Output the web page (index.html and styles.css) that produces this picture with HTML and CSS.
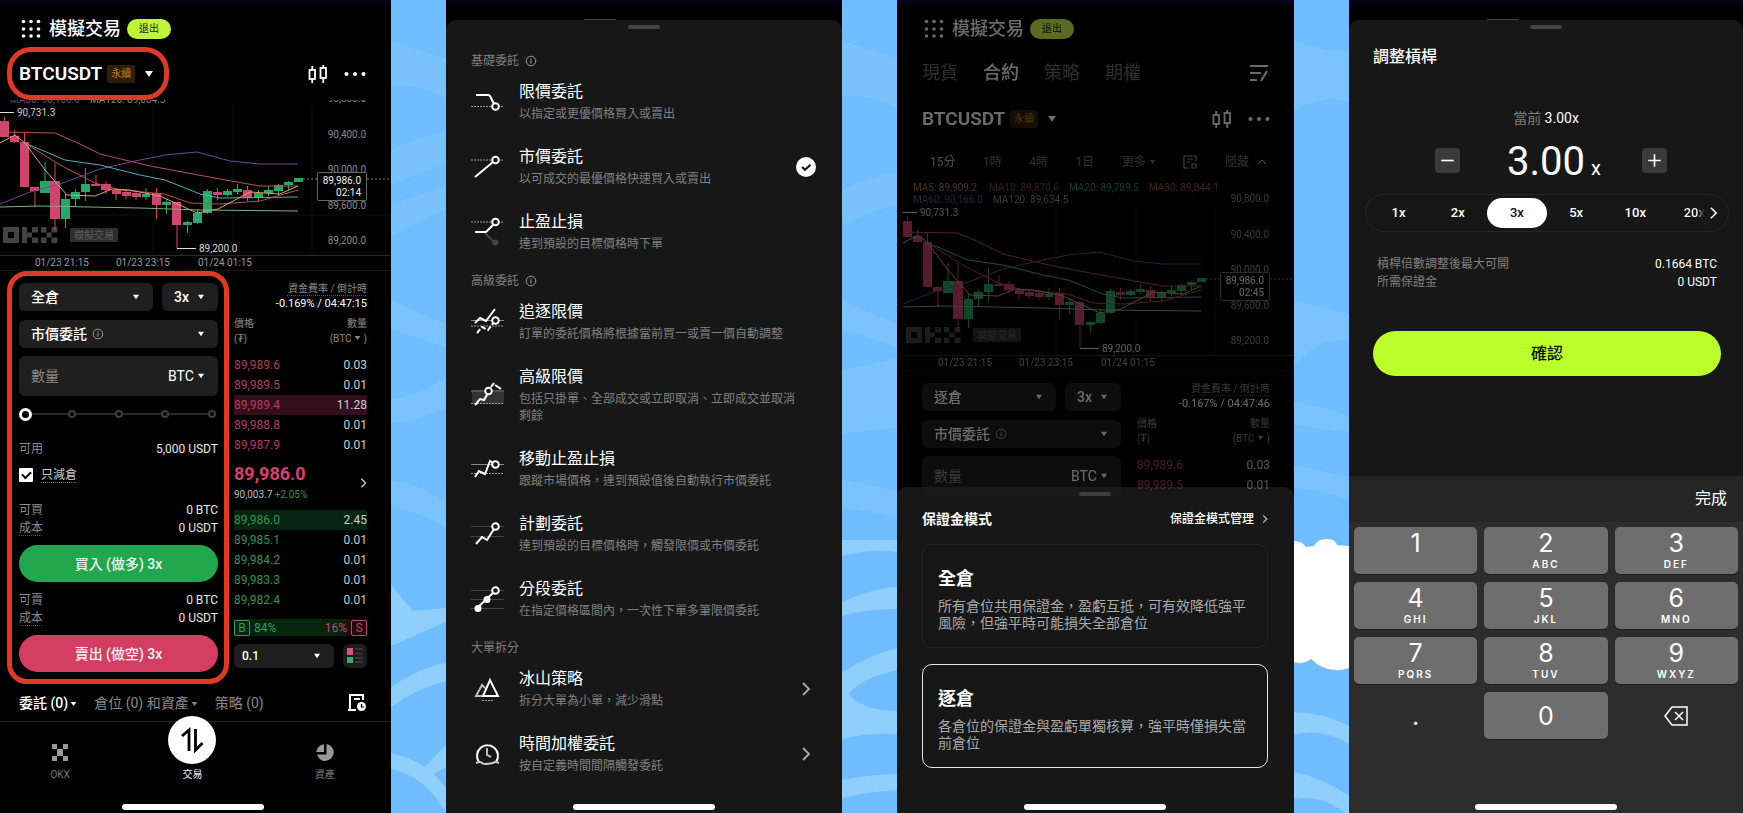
FILE: index.html
```html
<!DOCTYPE html>
<html lang="zh-Hant">
<head>
<meta charset="utf-8">
<meta name="viewport" content="width=device-width, initial-scale=1">
<title>模擬交易</title>
<link rel="stylesheet" href="styles.css">
</head>
<body>
<svg class="sprite" aria-hidden="true">
  <defs>
    <symbol id="i-grid" viewBox="0 0 20 20"><g fill="currentColor"><circle cx="2.5" cy="2.5" r="1.8"/><circle cx="10" cy="2.5" r="1.8"/><circle cx="17.500" cy="2.5" r="1.8"/><circle cx="2.5" cy="10" r="1.8"/><circle cx="10" cy="10" r="1.8"/><circle cx="17.500" cy="10" r="1.8"/><circle cx="2.5" cy="17" r="1.8"/><circle cx="10" cy="17" r="1.8"/><circle cx="17.500" cy="17" r="1.8"/></g></symbol>
    <symbol id="i-caret" viewBox="0 0 10 8"><path d="M1 1h8L5 7z" fill="currentColor"/></symbol>
    <symbol id="i-candles" viewBox="0 0 20 20"><g fill="none" stroke="currentColor" stroke-width="1.8"><rect x="1.500" y="6" width="5.500" height="9"/><path d="M4.250 2v4M4.250 15v4M15.250 1v3M15.250 14v5"/><rect x="12.500" y="4" width="5.500" height="10"/></g></symbol>
    <symbol id="i-more" viewBox="0 0 22 6"><g fill="currentColor"><circle cx="2.500" cy="3" r="2"/><circle cx="11" cy="3" r="2"/><circle cx="19.500" cy="3" r="2"/></g></symbol>
    <symbol id="i-info" viewBox="0 0 12 12"><circle cx="6" cy="6" r="4.800" fill="none" stroke="currentColor"/><path d="M6 5.300v3.200M6 3.300v1.100" stroke="currentColor" stroke-width="1.100"/></symbol>
    <symbol id="i-chev" viewBox="0 0 10 16"><path d="M2 2l6 6-6 6" fill="none" stroke="currentColor" stroke-width="1.800"/></symbol>
    <symbol id="i-check" viewBox="0 0 20 20"><circle cx="10" cy="10" r="10" fill="#fff"/><path d="M6 10l3 2.800 5.500-5" fill="none" stroke="#171717" stroke-width="2.200"/></symbol>
    <symbol id="i-book" viewBox="0 0 24 24"><rect width="24" height="24" rx="6" fill="#1c1c1c"/><rect x="4" y="4" width="6" height="7" fill="#e0567a"/><rect x="4" y="13" width="6" height="6" fill="#2fae66"/><path d="M12 5h8M12 9.500h8M12 14h8M12 18h8" stroke="#3c3234" stroke-width="2"/></symbol>
    <g id="chart">
      <path d="M153 5v150M233 5v150M312 5v150M0 115h391" stroke="#111"/>
      <path d="M0 155.500h391M0 171h391" stroke="#2b2b2b"/>
      <g font-size="10">
        <g fill="#888" text-anchor="end">
          <text x="366" y="2">90,800.0</text><text x="366" y="38">90,400.0</text><text x="366" y="73">90,000.0</text><text x="366" y="109">89,600.0</text><text x="366" y="144">89,200.0</text>
        </g>
        <g fill="#999" text-anchor="middle"><text x="62" y="166">01/23 21:15</text><text x="143" y="166">01/23 23:15</text><text x="225" y="166">01/24 01:15</text></g>
        <text x="10" y="3" fill="#6d4a8c">MA60: 90,166.0</text><text x="90" y="3" fill="#888">MA120: 89,634.5</text>
        <path d="M0 12.500h14M177 148.500h19" stroke="#ddd"/>
        <text x="17" y="16" fill="#ccc">90,731.3</text><text x="199" y="152" fill="#ddd">89,200.0</text>
      </g>
      <g fill="#434343"><path d="M3 127h16v16H3zm5 5v6h6v-6z" fill-rule="evenodd"/><path d="M22 127h5v16h-5zM27 132.500h5v5h-5zM32 127h6v5.500h-6zM32 137.500h6v5.500h-6zM41 127h5.500v5.500H41zM46.500 132.500h5v5h-5zM51.500 127h6v5.500h-6zM41 137.500h5.500v5.500H41zM51.500 137.500h6v5.500h-6z"/></g>
      <rect x="70" y="128" width="48" height="14" rx="1" fill="#2e2e2e"/><text x="94" y="139" font-size="10" text-anchor="middle" fill="#5c5c5c">模擬交易</text>
      <g stroke="#cf4470" fill="#cf4470"><path d="M4.500 17v4M14.500 30v13M24.500 33v10M35 90v17M55 63v67M96 75v10M106 81v13M116 88v12M126 89v10M136 90v10M156.500 88v31M177 124v24M217.500 88v12M247.500 86v15" stroke-width="1"/>
        <g stroke="none"><path d="M0 21h9v16H0zM10 36h9v6h-9zM20 42h9v45h-9zM30 87h9v4h-9zM50 81h10v38H50zM91 84h9v2h-9zM101 84h10v6h-10zM112 90h9v4h-9zM122 92h9v4h-9zM132 93h9v4h-9zM152 93h9v12h-9zM172 102h9v23h-9zM213 92h9v3h-9zM243 90h9v8h-9z"/></g></g>
      <g stroke="#2aa768" fill="#2aa768"><path d="M45 62v31M65.500 94v34M75.500 89v18M85.500 68v33M146 88v12M166.500 99v15M187.500 121v12M197.500 110v14M207.500 89v25M227.500 89v7M237.500 84v10M258.500 90v12M268.500 86v10M278.500 84v11M288.500 81v9" stroke-width="1"/>
        <g stroke="none"><path d="M40 81h10v12H40zM61 99h9v20h-9zM71 92h9v7h-9zM81 84h9v8h-9zM142 94h8v3h-8zM162 102h9v3h-9zM183 122h9v3h-9zM193 113h9v10h-9zM203 91h9v22h-9zM223 91h9v4h-9zM233 89h9v3h-9zM254 93h9v5h-9zM264 90h9v3h-9zM274 85h9v6h-9zM284 82h9v3h-9zM294 78h9v4h-9z"/></g></g>
      <g fill="none" stroke-linejoin="round" stroke-width="1">
        <path d="M0 32L55 33 80 44 100 54 150 66 220 79 260 86 298 86" stroke="#b8574c"/>
        <path d="M0 104L30 92 60 84 100 69 135 61 165 55 197 52 230 61 260 64 298 64" stroke="#76458f"/>
        <path d="M25 43L65 60 100 65 140 75 165 80 200 94 220 98 298 97" stroke="#4fb0b8"/>
        <path d="M25 43L60 65 95 83 120 90 165 94 190 103 220 104 260 101 298 90" stroke="#c04a50"/>
        <path d="M0 43L15 35 25 43 45 70 67 95 95 96 112 89 130 90 160 96 197 113 218 109 250 92 280 94 298 86" stroke="#d3a36a"/>
        <path d="M0 107L40 106 140 108 200 110 298 111" stroke="#79b57d"/>
        <path d="M303 79h14M367 79h24" stroke="#777" stroke-dasharray="2 2"/>
      </g>
      <rect x="317.500" y="72.500" width="49" height="28" rx="1" fill="#000" stroke="#666"/>
      <text x="361" y="84" font-size="10" text-anchor="end" fill="#eee">89,986.0</text>
    </g>
  </defs>
</svg>

<main class="board">
  <section class="phone">
    <header class="top"><svg class="ic20"><use href="#i-grid"/></svg><h1>模擬交易</h1><button class="exit">退出</button></header>
    <div class="pair"><button class="pair-btn marked">BTCUSDT <span class="perp">永續</span><svg class="caret big"><use href="#i-caret"/></svg></button><svg class="ic20 push"><use href="#i-candles"/></svg><svg class="more"><use href="#i-more"/></svg></div>
    <svg class="chart" viewBox="0 0 391 171" role="img" aria-label="BTCUSDT"><use href="#chart"/><text x="361" y="96" font-size="10" text-anchor="end" fill="#eee">02:14</text></svg>
    <div class="trade">
      <form class="order marked">
        <div class="split">
          <div class="pick"><select aria-label="保證金模式"><option>全倉</option></select><svg class="caret"><use href="#i-caret"/></svg></div>
          <div class="pick"><select aria-label="槓桿"><option>3x</option></select><svg class="caret"><use href="#i-caret"/></svg></div>
        </div>
        <div class="pick"><select aria-label="委託類型"><option>市價委託</option></select><svg class="hint"><use href="#i-info"/></svg><svg class="caret"><use href="#i-caret"/></svg></div>
        <div class="amount"><input type="text" placeholder="數量" aria-label="數量"><div class="pick unit"><select aria-label="單位"><option>BTC</option></select><svg class="caret"><use href="#i-caret"/></svg></div></div>
        <div class="slide"><i></i><i></i><i></i><i></i><i></i><input type="range" min="0" max="100" value="0" aria-label="比例"></div>
        <div class="kv avail"><span>可用</span><b>5,000 USDT</b></div>
        <label class="reduce"><input type="checkbox" checked><span>只減倉</span></label>
        <div class="kv buyrow"><span>可買</span><b>0 BTC</b></div>
        <div class="kv"><span class="dot">成本</span><b>0 USDT</b></div>
        <button class="act buy" type="button">買入 (做多) 3x</button>
        <div class="kv sellrow"><span>可賣</span><b>0 BTC</b></div>
        <div class="kv"><span class="dot">成本</span><b>0 USDT</b></div>
        <button class="act sell" type="button">賣出 (做空) 3x</button>
      </form>
      <div class="book">
        <div class="fund"><span class="dot">資金費率 / 倒計時</span><b>-0.169% / 04:47:15</b></div>
        <table class="asks">
          <thead><tr><th>價格<br>(₮)</th><th>數量<br>(BTC <svg class="caret tiny"><use href="#i-caret"/></svg> )</th></tr></thead>
          <tbody><tr><td>89,989.6</td><td>0.03</td></tr><tr><td>89,989.5</td><td>0.01</td></tr><tr class="hot"><td>89,989.4</td><td>11.28</td></tr><tr><td>89,988.8</td><td>0.01</td></tr><tr><td>89,987.9</td><td>0.01</td></tr></tbody>
        </table>
        <div class="last"><div><strong>89,986.0</strong><small>90,003.7 <em>+2.05%</em></small></div><svg class="chev"><use href="#i-chev"/></svg></div>
        <table class="bids"><tbody><tr class="hot"><td>89,986.0</td><td>2.45</td></tr><tr><td>89,985.1</td><td>0.01</td></tr><tr><td>89,984.2</td><td>0.01</td></tr><tr><td>89,983.3</td><td>0.01</td></tr><tr><td>89,982.4</td><td>0.01</td></tr></tbody></table>
        <div class="ratio"><b>B</b><span>84%</span><span class="s">16%</span><b class="s">S</b></div>
        <div class="depth"><div class="pick"><select aria-label="深度"><option>0.1</option></select><svg class="caret"><use href="#i-caret"/></svg></div><svg class="ic24"><use href="#i-book"/></svg></div>
      </div>
    </div>
    <div class="tabs"><button class="on">委託 (0)<svg class="caret tiny"><use href="#i-caret"/></svg></button><button>倉位 (0) 和資產<svg class="caret tiny"><use href="#i-caret"/></svg></button><button>策略 (0)</button>
      <svg class="ic20 push" viewBox="0 0 20 20"><path d="M16 7V2H3v15h6M1 17h8M7 6h6" fill="none" stroke="#fff" stroke-width="2"/><circle cx="14.500" cy="13.500" r="4.500" fill="#fff"/><path d="M14.500 11v3h2.500" fill="none" stroke="#000" stroke-width="1.200"/></svg></div>
    <footer class="bottom">
      <nav class="nav">
        <a href="#okx"><svg class="ic18" viewBox="0 0 18 18" fill="#999"><path d="M1 0h5v5H1zM12 0h5v5h-5zM6 5h6v7H6zM1 12h5v5H1zM12 12h5v5h-5z"/></svg>OKX</a>
        <a href="#trade" class="on"><svg class="disc" viewBox="0 0 48 48"><circle cx="24" cy="24" r="24" fill="#fff"/><path d="M14 20l7-6v21M27.500 13v21l7-7" fill="none" stroke="#000" stroke-width="2.800"/></svg>交易</a>
        <a href="#assets"><svg class="ic18" viewBox="0 0 18 18" fill="#999"><path d="M10.500 0A8.500 8.500 0 1 1 1 10.500h9.500z"/><path d="M8 .3V8H.3A8.500 8.500 0 0 1 8 .3z"/></svg>資產</a>
      </nav>
      <div class="home"></div>
    </footer>
  </section>

  <svg class="gap" viewBox="0 0 55 813" preserveAspectRatio="none" aria-hidden="true"><rect width="55" height="813" fill="#6fbcfe"/><g fill="#80c6fd"><path d="M0 40q30 12 55 18v40Q30 84 0 86zM0 150q30-14 55-18v32Q25 172 0 186zM0 205q25-10 55-18v22Q25 222 0 236z" opacity=".6"/><path d="M0 300q30 14 55 24v24Q26 336 0 330zM0 400q30-6 55-22v30Q26 420 0 424zM0 480q28 4 55 22v26Q26 510 0 508z" opacity=".7"/></g><g fill="#90cefe"><path d="M0 585l22 26 33-3v14L0 646zM0 687q30-20 55-24v18Q25 689 0 707zM0 753q24 6 34 14l21-22v22l-12 7 12 14v24Q32 775 0 769z"/></g></svg>

  <section class="phone sheetphone">
    <div class="sheet orders">
      <div class="grab"></div>
      <h2>基礎委託 <svg class="hint"><use href="#i-info"/></svg></h2>
      <button class="item"><svg viewBox="0 0 34 34"><path d="M0 21.500h33" class="dash"/><path d="M5 10h12q2 0 3 3l3 6"/><circle cx="24.500" cy="21.500" r="3.300" fill="#171717"/></svg><span><b>限價委託</b><small>以指定或更優價格買入或賣出</small></span></button>
      <button class="item"><svg viewBox="0 0 34 34"><path d="M0 10h33" class="dash"/><path d="M4 27L22 12"/><circle cx="24.500" cy="10" r="3.300" fill="#171717"/></svg><span><b>市價委託</b><small>以可成交的最優價格快速買入或賣出</small></span><svg class="tick"><use href="#i-check"/></svg></button>
      <button class="item"><svg viewBox="0 0 34 34"><path d="M0 7h33" class="dash"/><path d="M14 18l10 10" stroke="#444"/><circle cx="24.500" cy="27.500" r="3" fill="#444" stroke="none"/><path d="M4 17h11l7-7"/><circle cx="24.500" cy="7" r="3.300" fill="#171717"/></svg><span><b>止盈止損</b><small>達到預設的目標價格時下單</small></span></button>
      <h2>高級委託 <svg class="hint"><use href="#i-info"/></svg></h2>
      <button class="item"><svg viewBox="0 0 34 34"><path d="M0 15.500h33" class="thin"/><path d="M0 21h33" class="dash"/><path d="M4 18l5-5 6 3 9-12"/><path d="M6 28l5-6 6 3 6-8" stroke-dasharray="5 2"/><circle cx="24.500" cy="15.500" r="3.300" fill="#171717"/></svg><span><b>追逐限價</b><small>訂單的委託價格將根據當前買一或賣一價自動調整</small></span></button>
      <button class="item"><svg viewBox="0 0 34 34"><path d="M1 13h32v12H1z" fill="#333" stroke="none"/><path d="M0 12h33" class="thin"/><path d="M0 24.500h33" class="dash"/><path d="M4 26l5-6 4 1 4-7M20 8l3-4M24 6l6 4" /><circle cx="17.500" cy="12" r="3.300" fill="#171717"/></svg><span><b>高級限價</b><small>包括只掛單、全部成交或立即取消、立即成交並取消剩餘</small></span></button>
      <button class="item"><svg viewBox="0 0 34 34"><path d="M0 12.500h33" class="thin"/><path d="M0 21.500h33" class="dash"/><path d="M4 25l4-6 6 3 5-13 3 2"/><circle cx="24.500" cy="12.500" r="3.300" fill="#171717"/></svg><span><b>移動止盈止損</b><small>跟蹤市場價格，達到預設值後自動執行市價委託</small></span></button>
      <button class="item"><svg viewBox="0 0 34 34"><path d="M0 9.500h33M0 19.500h33" class="thin dim"/><path d="M5 27l6-7 5 3 7-11"/><circle cx="24.500" cy="9.500" r="3.300" fill="#171717"/></svg><span><b>計劃委託</b><small>達到預設的目標價格時，觸發限價或市價委託</small></span></button>
      <button class="item"><svg viewBox="0 0 34 34"><path d="M0 8.500h33M0 17.500h33M0 26.500h33" class="thin dim"/><path d="M6 26L22 11"/><circle cx="24.500" cy="8.500" r="3.300" fill="#171717"/><circle cx="16" cy="17.500" r="2.500" fill="#fff"/><circle cx="7" cy="26.500" r="2.500" fill="#fff"/></svg><span><b>分段委託</b><small>在指定價格區間內，一次性下單多筆限價委託</small></span></button>
      <h2>大單拆分</h2>
      <button class="item"><svg viewBox="0 0 34 34"><path d="M11 24H5l6-11 3 3" stroke="#bbb"/><path d="M12 24l7-16 8 16z"/><path d="M11 28.500h12" class="dash" stroke-width="2"/></svg><span><b>冰山策略</b><small>拆分大單為小單，減少滑點</small></span><svg class="chev"><use href="#i-chev"/></svg></button>
      <button class="item"><svg viewBox="0 0 34 34"><path d="M8 25a10.500 10.500 0 1 1 17 0"/><path d="M5 26q5-2 6 0t11 0q2-2 6 0" stroke="#ccc"/><path d="M16 11v7l4 2" stroke="#bbb"/></svg><span><b>時間加權委託</b><small>按自定義時間間隔觸發委託</small></span><svg class="chev"><use href="#i-chev"/></svg></button>
      <div class="home"></div>
    </div>
  </section>

  <svg class="gap" viewBox="0 0 55 813" preserveAspectRatio="none" aria-hidden="true"><rect width="55" height="813" fill="#6fbcfe"/><g fill="#80c6fd"><path d="M0 40q30 12 55 18v50Q30 94 0 96zM0 190q30-14 55-18v32Q25 212 0 226z" opacity=".6"/><path d="M0 300q30 14 55 24v24Q26 336 0 330zM0 370q30-6 55-12v70Q26 430 0 434zM0 480q28 4 55 12v26Q26 510 0 508z" opacity=".7"/></g><g fill="#90cefe"><path d="M0 556q30-8 55-4v-12H0zM0 602q30-14 55-15v22q-30 0-55 7zM0 672q30-18 55-24v22q-38 9-48 24 12 16 48 17v23q-30-1-55 5zM0 780q30-6 55-6v16q-30 2-55 8z"/></g></svg>

  <section class="phone stacked">
    <div class="behind">
      <header class="top"><svg class="ic20"><use href="#i-grid"/></svg><h1>模擬交易</h1><button class="exit">退出</button></header>
      <div class="markets"><button>現貨</button><button class="on">合約</button><button>策略</button><button>期權</button><svg class="ic20 push" viewBox="0 0 20 20"><path d="M1 3h18M1 10h11M1 17h7M12 18l6-10" fill="none" stroke="#fff" stroke-width="2.200"/></svg></div>
      <div class="pair"><button class="pair-btn">BTCUSDT <span class="perp">永續</span><svg class="caret big"><use href="#i-caret"/></svg></button><svg class="ic20 push"><use href="#i-candles"/></svg><svg class="more"><use href="#i-more"/></svg></div>
      <div class="frames"><button class="on">15分</button><button>1時</button><button>4時</button><button>1日</button><button>更多 <svg class="caret tiny"><use href="#i-caret"/></svg></button><button aria-label="指標"><svg class="ic14" viewBox="0 0 14 14"><path d="M6 13H1V1h12v5M4 4h6M4 7h3M9 9h4v4H9z" fill="none" stroke="#999" stroke-width="1.200"/></svg></button><button>隱藏 <svg class="ic10" viewBox="0 0 10 6"><path d="M1 5l4-4 4 4" fill="none" stroke="#ccc"/></svg></button></div>
      <svg class="chart" viewBox="-6 -25 397 196" role="img" aria-label="BTCUSDT"><use href="#chart"/><g font-size="10"><text x="10" y="-9" fill="#a8823c">MA5: 89,909.2</text><text x="86" y="-9" fill="#7a4450">MA10: 89,870.6</text><text x="166" y="-9" fill="#3a8a7c">MA20: 89,789.5</text><text x="246" y="-9" fill="#93582c">MA30: 89,844.1</text><text x="361" y="96" text-anchor="end" fill="#eee">02:45</text></g></svg>
      <div class="trade">
        <form class="order">
          <div class="split">
            <div class="pick"><select aria-label="保證金模式"><option>逐倉</option></select><svg class="caret"><use href="#i-caret"/></svg></div>
            <div class="pick"><select aria-label="槓桿"><option>3x</option></select><svg class="caret"><use href="#i-caret"/></svg></div>
          </div>
          <div class="pick"><select aria-label="委託類型"><option>市價委託</option></select><svg class="hint"><use href="#i-info"/></svg><svg class="caret"><use href="#i-caret"/></svg></div>
          <div class="amount"><input type="text" placeholder="數量" aria-label="數量"><div class="pick unit"><select aria-label="單位"><option>BTC</option></select><svg class="caret"><use href="#i-caret"/></svg></div></div>
        </form>
        <div class="book">
          <div class="fund"><span class="dot">資金費率 / 倒計時</span><b>-0.167% / 04:47:46</b></div>
          <table class="asks">
            <thead><tr><th>價格<br>(₮)</th><th>數量<br>(BTC <svg class="caret tiny"><use href="#i-caret"/></svg> )</th></tr></thead>
            <tbody><tr><td>89,989.6</td><td>0.03</td></tr><tr><td>89,989.5</td><td>0.01</td></tr></tbody>
          </table>
        </div>
      </div>
    </div>
    <div class="sheet margin">
      <div class="grab"></div>
      <div class="mhead"><h3>保證金模式</h3><a href="#manage">保證金模式管理 <svg class="chev"><use href="#i-chev"/></svg></a></div>
      <button class="mode"><b>全倉</b><span>所有倉位共用保證金，盈虧互抵，可有效降低強平風險，但強平時可能損失全部倉位</span></button>
      <button class="mode on"><b>逐倉</b><span>各倉位的保證金與盈虧單獨核算，強平時僅損失當前倉位</span></button>
      <div class="home"></div>
    </div>
  </section>

  <svg class="gap" viewBox="0 0 55 813" preserveAspectRatio="none" aria-hidden="true"><rect width="55" height="813" fill="#6fbcfe"/><g fill="#80c6fd"><path d="M0 40q30 12 55 12v50Q30 94 0 110zM0 300q30 8 55 14v26Q26 336 0 366zM0 402q26 4 55 14v16Q26 430 0 424zM0 466q28 4 55 12v22Q26 490 0 488z" opacity=".7"/></g><path d="M0 541q8 0 12 6l8-1q4-8 14-7 8 1 9 6l12 1v122q-14 5-27-1-6-3-11-8-8 6-17 3z" fill="#fff"/><g fill="#90cefe"><path d="M0 712q28 0 55 14v18Q28 728 0 735zM0 772q30 6 55 24v17h-4Q28 794 0 799z"/></g></svg>

  <section class="phone sheetphone">
    <div class="sheet lever">
      <div class="grab"></div>
      <h3>調整槓桿</h3>
      <p class="now"><span>當前</span> 3.00x</p>
      <div class="stepper"><button aria-label="減少"><svg viewBox="0 0 24 24"><path d="M6 12h12" stroke="#fff" stroke-width="1.600"/></svg></button><output><span>3.00</span><small>x</small></output><button aria-label="增加"><svg viewBox="0 0 24 24"><path d="M6 12h12M12 6v12" stroke="#fff" stroke-width="1.600"/></svg></button></div>
      <div class="presets"><button>1x</button><button>2x</button><button class="on">3x</button><button>5x</button><button>10x</button><button class="cut">20x</button><svg class="chev"><use href="#i-chev"/></svg></div>
      <dl><div><dt>槓桿倍數調整後最大可開</dt><dd>0.1664 BTC</dd></div><div><dt>所需保證金</dt><dd>0 USDT</dd></div></dl>
      <button class="confirm">確認</button>
      <div class="pad">
        <div class="padbar"><button>完成</button></div>
        <div class="keys">
          <button>1</button><button>2<small>ABC</small></button><button>3<small>DEF</small></button>
          <button>4<small>GHI</small></button><button>5<small>JKL</small></button><button>6<small>MNO</small></button>
          <button>7<small>PQRS</small></button><button>8<small>TUV</small></button><button>9<small>WXYZ</small></button>
          <button class="flat">.</button><button class="zero">0</button><button class="flat" aria-label="刪除"><svg viewBox="0 0 24 20"><path d="M8 1h15v18H8L1 10zM11 6l8 8M19 6l-8 8" fill="none" stroke="#fff" stroke-width="1.500"/></svg></button>
        </div>
        <div class="home"></div>
      </div>
    </div>
  </section>
</main>
</body>
</html>
```
FILE: styles.css
```css
* { box-sizing: border-box; }
body { margin: 0; background: #000; color: #fff; font: 12px/18px Roboto, "Noto Sans CJK TC", sans-serif; }
h1, h2, h3, p, dl, dd { margin: 0; }
button, input, select { font: inherit; color: inherit; background: none; border: 0; padding: 0; margin: 0; }
button { cursor: pointer; }
a { color: inherit; text-decoration: none; }
svg { display: block; flex: none; }
svg text { font-family: Roboto, "Noto Sans CJK TC", sans-serif; }
.sprite { position: absolute; width: 0; height: 0; }

.board { display: grid; grid-template-columns: 391fr 55px 396fr 55px 397fr 55px 394fr; min-height: 100vh; }
.gap { width: 100%; height: 100%; }
.phone { display: flex; flex-direction: column; min-width: 0; overflow: hidden; background: linear-gradient(#060018 4px, #000 5px); }
.home { width: 142px; height: 6px; border-radius: 3px; background: #fff; margin: auto auto 3px; }

.ic10 { width: 10px; height: 6px; }
.ic14 { width: 14px; height: 14px; }
.ic18 { width: 18px; height: 18px; }
.ic20 { width: 20px; height: 20px; }
.ic24 { width: 24px; height: 24px; }
.push { margin-left: auto; }
.caret { width: 8px; height: 6px; }
.caret.big { width: 10px; height: 8px; }
.caret.tiny { display: inline-block; width: 7px; height: 6px; vertical-align: 1px; }
.hint { width: 12px; height: 12px; color: #999; }
.chev { width: 7px; height: 14px; color: #ccc; }

.top { display: flex; align-items: center; height: 47px; padding: 11px 20px 0 21px; }
.top h1 { font-size: 18px; font-weight: 500; line-height: 36px; margin-left: 8px; }
.exit { width: 44px; height: 20px; border-radius: 10px; background: #bcf53c; color: #222; font-size: 10px; line-height: 20px; margin-left: 6px; }

.pair { display: flex; align-items: center; height: 53px; padding: 0 25px 0 7px; }
.pair-btn { display: flex; align-items: center; height: 53px; padding: 0 10px 0 7px; border: 5px solid transparent; border-radius: 24px; font-size: 19px; font-weight: 600; }
.marked { border-color: #dc3b27; }
.perp { margin: 0 9px 0 5px; padding: 0 4px; height: 18px; line-height: 18px; background: #2e2005; color: #bd8322; font-size: 10px; font-weight: 400; border-radius: 2px; }
.more { width: 22px; height: 6px; margin-left: 16px; }
.chart { width: 100%; height: auto; }

.trade { display: grid; grid-template-columns: 222fr 133fr; gap: 5px; padding: 0 24px 0 7px; }
.order { border-width: 5px; border-style: solid; border-radius: 20px; padding: 7px 6px 7px 7px; display: flex; flex-direction: column; min-width: 0; }
.order:not(.marked) { border-color: transparent; }
.split { display: grid; grid-template-columns: 134fr 56fr; gap: 9px; margin-bottom: 9px; }
.pick { display: grid; align-items: center; background: #1f1f1f; border-radius: 6px; height: 28px; font-size: 14px; font-weight: 500; }
.pick > * { grid-area: 1 / 1; }
.pick select { appearance: none; width: 100%; height: 28px; padding: 0 12px; outline: 0; }
.pick .caret { justify-self: end; margin-right: 13px; pointer-events: none; }
.pick .hint { margin-left: 73px; }
.amount { display: flex; align-items: center; height: 40px; margin-top: 8px; background: #1f1f1f; border-radius: 6px; }
.amount input { flex: 1; min-width: 0; padding-left: 12px; font-size: 14px; }
.amount input::placeholder { color: #888; opacity: 1; }
.unit { width: 62px; font-weight: 400; }
.amount .unit select { padding-left: 12px; }
.slide { display: flex; justify-content: space-between; align-items: center; position: relative; height: 20px; margin-top: 8px; padding: 0 2px; background: linear-gradient(#292929, #292929) center / 188px 2px no-repeat; }
.slide i { width: 8px; height: 8px; border: 2px solid #3d3d3d; border-radius: 50%; background: #000; }
.slide input { position: absolute; inset: 0; width: 100%; appearance: none; }
.slide input::-webkit-slider-thumb { appearance: none; width: 13px; height: 13px; border: 3px solid #fff; border-radius: 50%; background: #000; }
.kv { display: flex; justify-content: space-between; }
.kv span { color: #8c8c8c; }
.kv b { font-weight: 400; color: #e8e8e8; font-size: 12px; }
.dot { text-decoration: underline dotted #555; text-underline-offset: 3px; }
.avail { margin-top: 16px; }
.reduce { display: flex; align-items: center; gap: 8px; height: 18px; margin-top: 8px; color: #ccc; }
.reduce span { text-decoration: underline dotted #777; text-underline-offset: 3px; }
.reduce input { appearance: none; width: 14px; height: 14px; background: #fff; border-radius: 1px; display: grid; place-items: center; }
.reduce input::after { content: ""; width: 7px; height: 4px; border: solid #000; border-width: 0 0 2px 2px; transform: rotate(-45deg); margin-bottom: 2px; }
.buyrow { margin-top: 17px; }
.sellrow { margin-top: 9px; }
.act { height: 37px; margin-top: 8px; border-radius: 19px; font-size: 14px; font-weight: 500; color: #f2f2f2; }
.buy { background: #21a84e; }
.sell { background: #d33e62; }

.book { padding-top: 10px; min-width: 0; }
.fund { display: flex; flex-direction: column; align-items: flex-end; font-size: 11px; line-height: 15px; white-space: nowrap; }
.fund span { color: #888; font-size: 10px; }
.fund b { font-weight: 400; }
.book table { width: 100%; border-collapse: collapse; }
.book th { font-size: 10px; font-weight: 400; color: #888; line-height: 15px; text-align: left; padding: 5px 0 9px; }
.book td { height: 20px; padding: 0; line-height: 20px; color: #ccc; }
.book td:last-child, .book th:last-child { text-align: right; }
.book .asks td:first-child { color: #b83a5e; }
.book .bids td:first-child { color: #2c9552; }
.asks .hot { background: #330f1c; }
.bids .hot { background: #072413; }
.last { display: flex; justify-content: space-between; align-items: center; padding: 8px 0; }
.last strong { display: block; font-size: 18px; line-height: 22px; font-weight: 700; color: #d9406a; }
.last small { display: block; font-size: 10px; line-height: 14px; margin-top: 3px; color: #bbb; }
.last em { font-style: normal; color: #2c9552; }
.ratio { display: flex; align-items: center; gap: 4px; height: 17px; margin-top: 9px; background: linear-gradient(90deg, #05250f 84%, #250812 84%); color: #2f9d56; }
.ratio b { width: 16px; height: 16px; border: 1px solid; border-radius: 2px; font-weight: 400; line-height: 14px; text-align: center; }
.ratio .s { color: #c04468; }
.ratio span.s { margin-left: auto; }
.depth { display: flex; justify-content: space-between; margin-top: 8px; }
.depth .pick { flex: 1; height: 24px; margin-right: 9px; font-size: 12px; }
.depth select { height: 24px; padding: 0 8px; }

.tabs { display: flex; align-items: center; gap: 17px; height: 38px; padding: 0 24px 0 19px; border-bottom: 1px solid #262626; }
.tabs button { font-size: 14px; color: #888; white-space: nowrap; }
.tabs .on { color: #fff; font-weight: 500; }
.tabs .caret { margin-left: 2px; }
.bottom { flex: 1; display: flex; flex-direction: column; margin-left: -6px; }
.nav { display: grid; grid-template-columns: repeat(3, 1fr); }
.nav a { display: flex; flex-direction: column; align-items: center; justify-content: flex-end; gap: 6px; height: 60px; font-size: 10px; line-height: 14px; color: #777; }
.nav .on { color: #eee; gap: 4px; }
.disc { width: 48px; height: 48px; }

.sheetphone { padding-top: 20px; background: linear-gradient(#39481b, #39481b) 138px 19px / 32px 1px no-repeat, linear-gradient(#060018 4px, #000 5px); }
.sheet { flex: 1; display: flex; flex-direction: column; background: #171717; border-radius: 10px 10px 0 0; padding: 0 26px 0 25px; }
.grab { width: 32px; height: 4px; border-radius: 2px; background: #444; margin: 5px auto 0; flex: none; }
.orders h2 { display: flex; align-items: center; gap: 6px; font-size: 12px; line-height: 16px; font-weight: 400; color: #808080; margin: 20px 0 12px; }
.orders .grab { margin-bottom: 4px; }
.item { display: grid; grid-template-columns: 34px 1fr 20px; align-items: center; text-align: left; }
.item + .item { margin-top: 23px; }
.item > svg:first-child { width: 34px; height: 34px; fill: none; stroke: #fff; stroke-width: 2; }
.item .thin { stroke: #888; stroke-width: 1; }
.item .dim { stroke: #444; }
.item .dash { stroke: #999; stroke-width: 1; stroke-dasharray: 2 1; }
.item span { padding-left: 14px; margin-right: -1px; }
.item b { display: block; font-size: 16px; line-height: 22px; font-weight: 400; }
.item small { display: block; font-size: 12px; line-height: 17px; margin-top: 3px; color: #808080; }
.tick { width: 20px; height: 20px; }
.item .chev { justify-self: center; width: 10px; height: 16px; color: #aaa; }

.stacked { display: grid; }
.stacked > * { grid-area: 1 / 1; min-width: 0; }
.behind { height: 0; min-height: 100%; overflow: hidden; opacity: 0.42; }
.behind .top { padding-left: 27px; }
.behind .pair, .behind .trade { padding-left: 13px; padding-right: 24px; }
.behind .exit { background: #d8ff50; }
.markets { display: flex; align-items: center; gap: 25px; height: 45px; padding: 7px 25px 0; font-size: 18px; color: #707070; }
.markets .on { color: #fff; font-weight: 500; }
.frames { display: flex; align-items: center; justify-content: space-between; height: 30px; padding: 4px 27px 0 33px; color: #777; }
.frames .on { color: #bbb; }
.frames button:last-child { display: flex; align-items: center; gap: 8px; }
.margin { align-self: end; }
.mhead { display: flex; justify-content: space-between; align-items: center; height: 24px; margin: 11px 0 13px; }
.mhead h3 { font-size: 14px; font-weight: 700; }
.mhead a { display: flex; align-items: center; gap: 8px; font-weight: 500; }
.mhead .chev { width: 6px; height: 10px; }
.mode { border: 1px solid #262626; border-radius: 10px; padding: 21px 15px 15px; text-align: left; }
.mode.on { border-color: #e6e6e6; }
.mode + .mode { margin-top: 16px; }
.mode b { display: block; font-size: 18px; line-height: 26px; }
.mode span { display: block; margin-top: 6px; font-size: 14px; line-height: 17px; color: #aaa; }
.margin .home { margin-top: 36px; }
.margin .grab { background: #555; }

.lever { padding: 0; }
.lever h3 { font-size: 16px; line-height: 24px; font-weight: 500; margin: 16px 24px 0; }
.now { font-size: 14px; line-height: 20px; text-align: center; margin-top: 39px; }
.now span { color: #808080; }
.stepper { display: flex; align-items: center; justify-content: space-between; height: 50px; margin: 7px 76px 0 86px; }
.stepper button { width: 25px; height: 25px; background: #3a3a3a; border-radius: 4px; }
.stepper output { display: flex; align-items: baseline; gap: 6px; font-size: 40px; line-height: 44px; padding: 4px 0 0 6px; }
.stepper small { font-size: 20px; line-height: 24px; }
.presets { display: flex; align-items: center; height: 38px; margin: 9px 14px 0 16px; padding: 0 10px 0 3px; border: 1px solid #262626; border-radius: 19px; font-size: 13px; }
.presets button { flex: 59 1 0; height: 30px; border-radius: 15px; font-weight: 500; }
.presets .on { background: #fff; color: #111; }
.presets .cut { flex-grow: 40; text-align: right; padding-right: 1px; background: linear-gradient(90deg, #fff 78%, #333 92%); background-clip: text; color: transparent; }
.presets .chev { width: 9px; height: 14px; color: #fff; margin-left: 3px; }
.lever dl { margin: 23px 26px 0 28px; }
.lever dl div { display: flex; justify-content: space-between; }
.lever dt { color: #808080; }
.confirm { height: 45px; margin: 40px 22px 0 24px; border-radius: 23px; background: #bbff2d; color: #111; font-size: 16px; font-weight: 500; }
.pad { flex: 1; display: flex; flex-direction: column; margin-top: 100px; background: #2d2d2d; }
.padbar { display: flex; justify-content: flex-end; height: 46px; padding: 0 16px; background: #252525; font-size: 16px; }
.keys { display: grid; grid-template-columns: repeat(3, 1fr); gap: 8px 7px; padding: 5px; }
.keys button { display: flex; flex-direction: column; align-items: center; height: 47px; border-radius: 5px; background: #6e6e6e; box-shadow: 0 1px #1c1c1c; font: 25px/32px Inter, sans-serif; }
.keys small { font-size: 10px; line-height: 10px; font-weight: 600; letter-spacing: 2px; }
.keys .flat { background: none; box-shadow: none; justify-content: center; }
.keys .zero { justify-content: center; }
.keys svg { width: 24px; height: 20px; }
```
